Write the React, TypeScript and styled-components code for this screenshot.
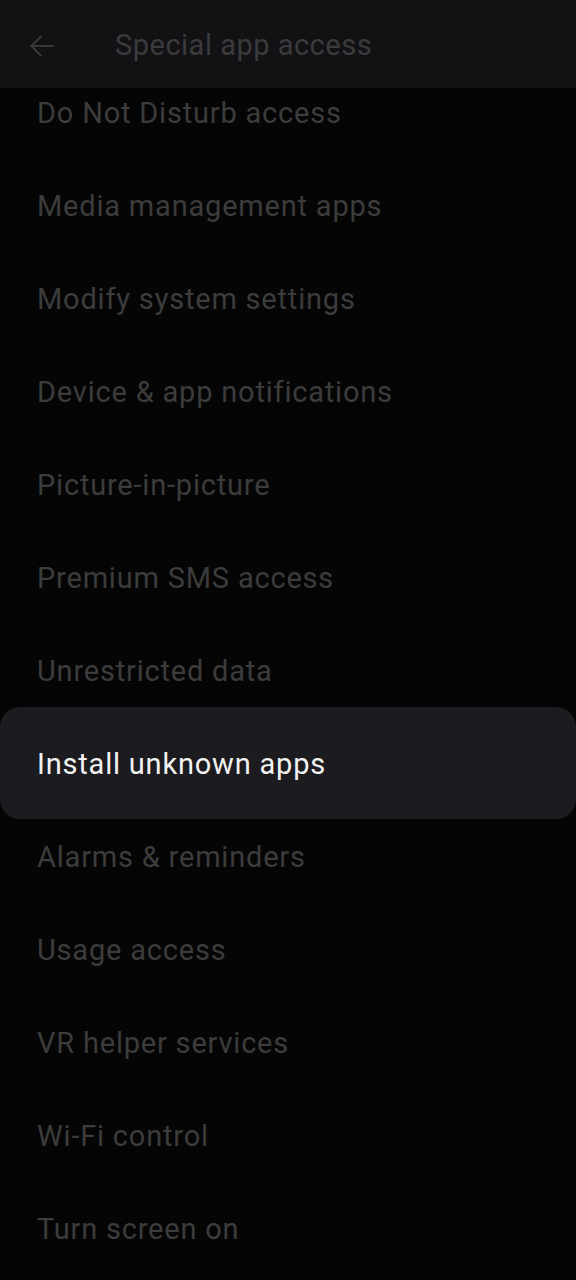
import React from "react";
import styled, { createGlobalStyle } from "styled-components";

const GlobalStyle = createGlobalStyle`
  html, body {
    margin: 0;
    padding: 0;
    background: #050505;
  }
  body {
    font-family: Roboto, "Noto Sans", sans-serif;
  }
`;

const Screen = styled.div`
  width: 576px;
  height: 1280px;
  overflow: hidden;
  background: #050505;
`;

const Header = styled.header`
  position: relative;
  z-index: 2;
  height: 88px;
  display: flex;
  align-items: center;
  background: #121214;
`;

const BackButton = styled.div`
  width: 115px;
  padding: 4px 0 0 27px;
  box-sizing: border-box;
  display: flex;
  align-items: center;
  color: #3a3a3c;
`;

const Title = styled.h1`
  margin: 0;
  padding-top: 1px;
  font-size: 29px;
  font-weight: 400;
  letter-spacing: 0.5px;
  color: #3b3b3e;
`;

const List = styled.ul`
  list-style: none;
  margin: -21.5px 0 0;
  padding: 0;
`;

const Item = styled.li<{ $active?: boolean }>`
  position: relative;
  height: 93px;
  display: flex;
  align-items: center;
  padding-left: 37px;
  font-size: 29px;
  letter-spacing: 0.8px;
  color: ${p => (p.$active ? "#f2f2f2" : "#3c3c3c")};

  &::before {
    content: "";
    display: ${p => (p.$active ? "block" : "none")};
    position: absolute;
    left: 0;
    right: 0;
    top: -10.5px;
    bottom: -8.5px;
    border-radius: 20px;
    background: #1c1c20;
  }
`;

const Label = styled.span`
  position: relative;
`;

const items = [
  "Do Not Disturb access",
  "Media management apps",
  "Modify system settings",
  "Device & app notifications",
  "Picture-in-picture",
  "Premium SMS access",
  "Unrestricted data",
  "Install unknown apps",
  "Alarms & reminders",
  "Usage access",
  "VR helper services",
  "Wi-Fi control",
  "Turn screen on"
];

const ArrowBack = () => (
  <svg
    width="30"
    height="30"
    viewBox="0 0 24 24"
    fill="none"
    stroke="currentColor"
    strokeWidth="1.5"
    strokeLinecap="square"
  >
    <path d="M21 12H3.5" />
    <path d="M11 4.5L3.5 12l7.5 7.5" />
  </svg>
);

const App: React.FunctionComponent = () => (
  <Screen>
    <GlobalStyle />
    <Header>
      <BackButton>
        <ArrowBack />
      </BackButton>
      <Title>Special app access</Title>
    </Header>
    <List>
      {items.map(item => (
        <Item key={item} $active={item === "Install unknown apps"}>
          <Label>{item}</Label>
        </Item>
      ))}
    </List>
  </Screen>
);

export default App;
